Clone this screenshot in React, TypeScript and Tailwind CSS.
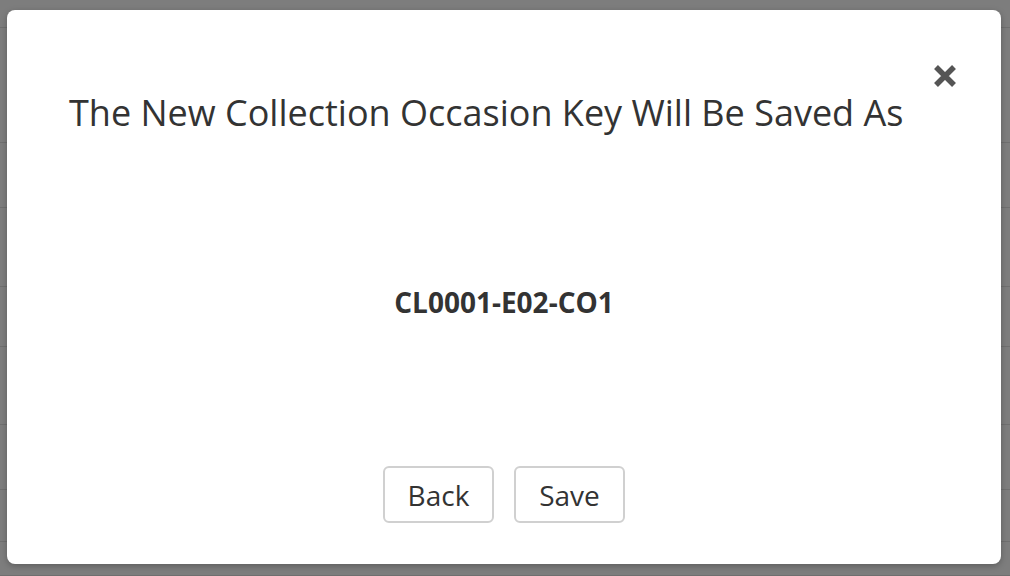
import React from "react";

const rowHeights = [28, 115, 65, 79, 60, 78, 65, 52, 34];

function CloseIcon() {
  return (
    <svg width="26" height="26" viewBox="0 0 26 26" aria-hidden="true">
      <path d="M4 4 L22 22 M22 4 L4 22" stroke="#555555" strokeWidth="5.5" strokeLinecap="butt" />
    </svg>
  );
}

export default function App() {
  return (
    <div
      className="relative h-[576px] w-[1010px] overflow-hidden bg-[#7d7d7d]"
      style={{ fontFamily: '"Open Sans", "Noto Sans", sans-serif' }}
    >
      {/* faded table rows behind the backdrop */}
      <div className="flex flex-col">
        {rowHeights.map((h, i) => (
          <div key={i} className="border-b border-[#6f6f6f]" style={{ height: h }} />
        ))}
      </div>

      <div className="absolute left-[7px] top-[10px] flex h-[554px] w-[994px] flex-col rounded-lg bg-white shadow-[0_2px_6px_rgba(0,0,0,0.25)]">
        <button className="absolute right-[43px] top-[53px] p-0" aria-label="Close">
          <CloseIcon />
        </button>

        <h2 className="pl-[62px] pt-[81px] text-[36px] leading-[44px] font-normal text-[#333333]">
          The New Collection Occasion Key Will Be Saved As
        </h2>

        <p className="mt-[151px] text-center text-[28px] leading-[32px] font-bold text-[#333333]">
          CL0001-E02-CO1
        </p>

        <div className="mt-[148px] flex justify-center gap-5">
          <button className="h-[57px] w-[111px] rounded-md border-2 border-[#d0d0d0] bg-white text-[28px] text-[#333333]">
            Back
          </button>
          <button className="h-[57px] w-[111px] rounded-md border-2 border-[#d0d0d0] bg-white text-[28px] text-[#333333]">
            Save
          </button>
        </div>
      </div>
    </div>
  );
}
